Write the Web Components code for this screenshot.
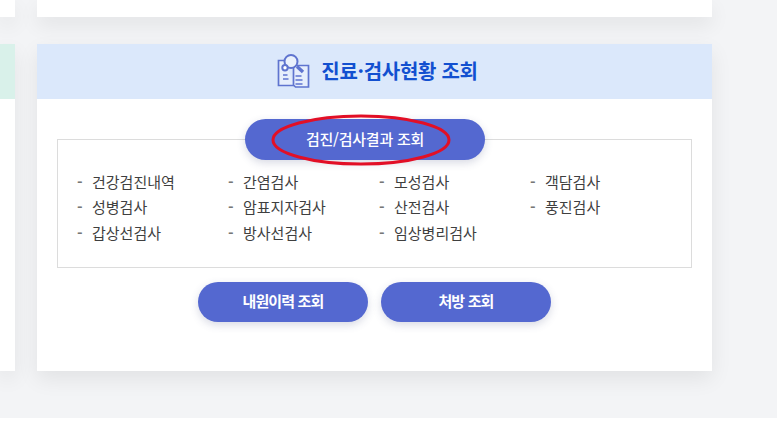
<!DOCTYPE html>
<html lang="ko"><head><meta charset="utf-8"><title>진료·검사현황 조회</title>
<style>html,body{margin:0;background:#fff}body{font-family:"Noto Sans CJK KR","Noto Sans",sans-serif}</style></head>
<body>
<template id="t-page"><style>
:host{display:grid;height:418px;overflow:hidden;background:#f3f4f6;grid-template-columns:15px 675px;grid-template-rows:17px 327px;column-gap:22px;row-gap:27px}
</style><slot></slot></template>

<template id="t-card"><style>
:host{display:block;background:#fff;box-shadow:0 8px 20px rgba(0,0,0,.075)}
:host([stub]) header,:host([stub]) .b{display:none}
header{height:55px;box-sizing:border-box;padding:0 0 2px 6px;display:flex;align-items:center;justify-content:center;gap:11px;background:var(--head,#dbe8fb)}
h2{margin:0;font-size:20px;font-weight:700;color:#1250d0;letter-spacing:-.3px;line-height:1;white-space:nowrap}
.b{padding:20px 20px 0;display:flex;flex-direction:column;align-items:stretch}
</style><header><slot name="icon"></slot><h2><slot name="title"></slot></h2></header><div class="b"><slot></slot></div></template>

<template id="t-btn"><style>
:host{display:flex;align-items:center;justify-content:center;box-sizing:border-box;padding-bottom:3px;width:170px;height:40px;border-radius:20px;background:#5468d0;color:#fff;font-size:15px;font-weight:var(--w,700);letter-spacing:var(--ls,-.85px);box-shadow:0 3px 8px rgba(60,70,120,.2);white-space:nowrap}
</style><slot></slot></template>

<template id="t-list"><style>
:host{display:grid;grid-template-columns:repeat(4,151px);grid-template-rows:25px 26px 25px;height:129px;box-sizing:border-box;border:1px solid #dcdcdc;padding:29px 0 0 19px;margin-top:-21px;font-size:15px;color:#3f3f3f;align-items:start}
</style><slot></slot></template>

<template id="t-item"><style>
:host{display:flex;line-height:25px;white-space:nowrap}
i{font-style:normal;font-weight:700;width:15px;color:#777;flex:none}
</style><i>-</i><slot></slot></template>

<x-page>
  <x-card stub></x-card>
  <x-card stub></x-card>
  <x-card style="--head:#d9f1ea"></x-card>
  <x-card>
    <svg slot="icon" width="33" height="34" viewBox="0 0 33 34" fill="none" stroke="#5f74cf" stroke-width="1.7" style="display:block">
      <path d="M8 6.500H1.500V31.500H17" fill="#e6eefc"/>
      <path d="M16.500 11.500H31.500V33H18.500L16.500 31Z" fill="#e6eefc"/>
      <path d="M6 21h4.500M6 25h5.500M18.500 22h6M18.500 26h7M18.500 30h7" stroke-width="1.400"/>
      <circle cx="14" cy="7.500" r="6.500" fill="#eaf1fc" stroke-width="2"/>
      <path d="M20 12.500l6 5.500" stroke-width="3.400"/>
      <circle cx="8" cy="13.700" r="2.700" fill="#fff" stroke-width="2"/>
    </svg>
    <span slot="title">진료·검사현황 조회</span>
    <x-main-btn>검진/검사결과 조회</x-main-btn>
    <x-list>
      <x-item>건강검진내역</x-item><x-item>간염검사</x-item><x-item>모성검사</x-item><x-item>객담검사</x-item>
      <x-item>성병검사</x-item><x-item>암표지자검사</x-item><x-item>산전검사</x-item><x-item>풍진검사</x-item>
      <x-item>갑상선검사</x-item><x-item>방사선검사</x-item><x-item>임상병리검사</x-item>
    </x-list>
    <x-actions>
      <x-btn>내원이력 조회</x-btn><x-btn>처방 조회</x-btn>
    </x-actions>
  </x-card>
</x-page>

<script>
function def(name,tpl){customElements.define(name,class extends HTMLElement{constructor(){super();this.attachShadow({mode:'open'}).appendChild(document.getElementById(tpl).content.cloneNode(true));}})}
def('x-page','t-page');def('x-card','t-card');def('x-btn','t-btn');def('x-list','t-list');def('x-item','t-item');
customElements.define('x-actions',class extends HTMLElement{constructor(){super();this.attachShadow({mode:'open'}).innerHTML='<style>:host{display:flex;justify-content:center;gap:13px;margin-top:14px}</style><slot></slot>';}});
customElements.define('x-main-btn',class extends HTMLElement{constructor(){super();this.attachShadow({mode:'open'}).innerHTML=`<style>
:host{display:block;align-self:flex-start;margin-left:188px;position:relative;z-index:1;width:240px;height:41px}
x-btn{width:100%;height:100%;border-radius:21px;--ls:-.25px;--w:500}
svg{position:absolute;left:26px;top:-5px;pointer-events:none}
</style><x-btn><slot></slot></x-btn>
<svg width="180" height="52" viewBox="0 0 180 52" fill="none"><ellipse cx="90" cy="26" rx="88" ry="24" stroke="#e20f26" stroke-width="3"/></svg>`;}});
</script>
</body></html>
